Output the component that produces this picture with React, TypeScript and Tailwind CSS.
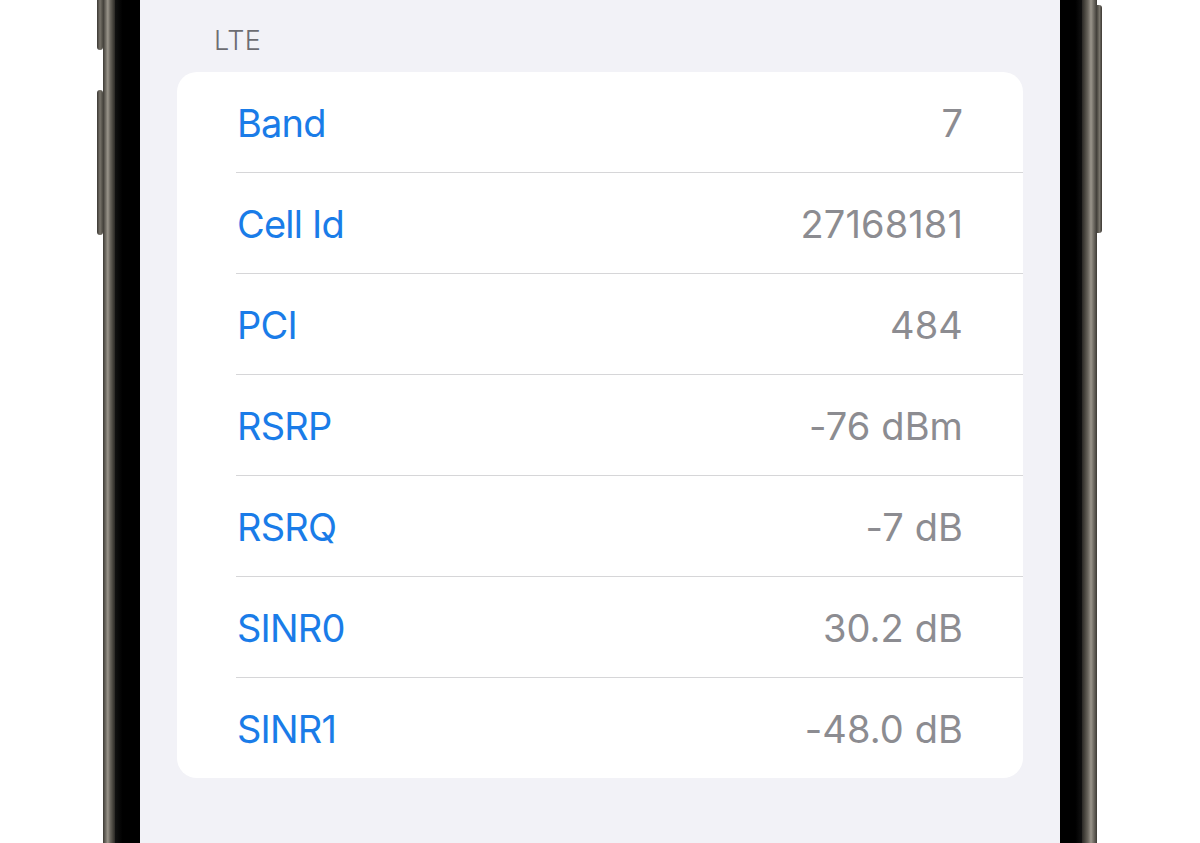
import React from "react";

const rows: [string, string][] = [
  ["Band", "7"],
  ["Cell Id", "27168181"],
  ["PCI", "484"],
  ["RSRP", "-76 dBm"],
  ["RSRQ", "-7 dB"],
  ["SINR0", "30.2 dB"],
  ["SINR1", "-48.0 dB"],
];

const metal =
  "bg-[linear-gradient(to_right,#3d3a35_0%,#6b675f_20%,#9a958b_40%,#6a665e_60%,#4a4740_80%,#2a2825_100%)]";
const metalR =
  "bg-[linear-gradient(to_left,#3d3a35_0%,#6b675f_20%,#9a958b_40%,#6a665e_60%,#4a4740_80%,#2a2825_100%)]";

export default function App() {
  return (
    <div
      className="w-[1200px] h-[843px] bg-white flex overflow-hidden"
      style={{ fontFamily: "Inter, 'Noto Sans', sans-serif" }}
    >
      <div className="w-[97px] shrink-0" />
      {/* left buttons */}
      <div className="w-[6px] shrink-0 flex flex-col">
        <div className="h-[50px] rounded-b-[3px] bg-[linear-gradient(to_right,#3a3732,#77736a,#4a4740)]" />
        <div className="h-[40px]" />
        <div className="h-[145px] rounded-[3px] bg-[linear-gradient(to_right,#3a3732,#77736a,#4a4740)]" />
      </div>
      <div className={`w-[12px] shrink-0 ${metal}`} />
      <div className="w-[25px] shrink-0 bg-[linear-gradient(to_right,#111,#000_30%,#000)]" />
      {/* screen */}
      <div className="w-[920px] shrink-0 bg-[#f2f2f7] px-[37px] flex flex-col">
        <div className="h-[72px] flex items-center pl-[37px] pt-[11px] text-[27px] font-light text-[#6d6d72] tracking-[0.5px]">
          LTE
        </div>
        <div className="bg-white rounded-[20px] flex flex-col">
          {rows.map(([k, v], i) => (
            <div key={k} className="pl-[59px]">
              <div
                className={`flex items-center justify-between pl-[1px] pr-[60px] pt-[2px] ${
                  i < rows.length - 1 ? "h-[101px] border-b border-[#d6d6d8]" : "h-[100px]"
                }`}
              >
                <span className="text-[38px] text-[#1a7ce8] tracking-[-0.8px]">{k}</span>
                <span className="text-[38px] text-[#8c8c91] tracking-[0.1px]">{v}</span>
              </div>
            </div>
          ))}
        </div>
      </div>
      <div className="w-[22px] shrink-0 bg-[linear-gradient(to_left,#111,#000_30%,#000)]" />
      <div className={`w-[15px] shrink-0 ${metalR}`} />
      <div className="w-[5px] shrink-0 flex flex-col">
        <div className="h-[5px]" />
        <div className="h-[228px] rounded-r-[3px] bg-[linear-gradient(to_left,#3a3732,#77736a,#4a4740)]" />
      </div>
      <div className="flex-1" />
    </div>
  );
}
